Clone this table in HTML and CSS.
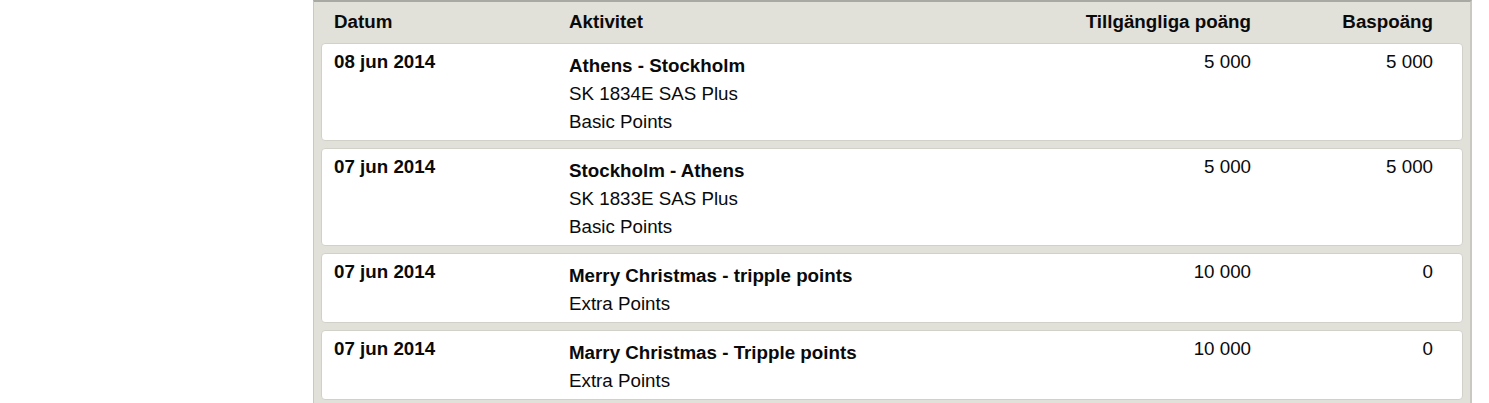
FILE: index.html
```html
<!DOCTYPE html>
<html lang="sv">
<head>
<meta charset="utf-8">
<title>Poänghistorik</title>
<link rel="stylesheet" href="styles.css">
</head>
<body>
<div class="page">
  <div class="panel">
    <div class="head">
      <div class="c-date">Datum</div>
      <div class="c-act">Aktivitet</div>
      <div class="c-pts">Tillgängliga poäng</div>
      <div class="c-base">Baspoäng</div>
    </div>
    <div class="card">
      <div class="c-date">08 jun 2014</div>
      <div class="c-act">
        <div class="title">Athens - Stockholm</div>
        <div class="line">SK 1834E SAS Plus</div>
        <div class="line">Basic Points</div>
      </div>
      <div class="c-pts">5 000</div>
      <div class="c-base">5 000</div>
    </div>
    <div class="card">
      <div class="c-date">07 jun 2014</div>
      <div class="c-act">
        <div class="title">Stockholm - Athens</div>
        <div class="line">SK 1833E SAS Plus</div>
        <div class="line">Basic Points</div>
      </div>
      <div class="c-pts">5 000</div>
      <div class="c-base">5 000</div>
    </div>
    <div class="card">
      <div class="c-date">07 jun 2014</div>
      <div class="c-act">
        <div class="title">Merry Christmas - tripple points</div>
        <div class="line">Extra Points</div>
      </div>
      <div class="c-pts">10 000</div>
      <div class="c-base">0</div>
    </div>
    <div class="card">
      <div class="c-date">07 jun 2014</div>
      <div class="c-act">
        <div class="title">Marry Christmas - Tripple points</div>
        <div class="line">Extra Points</div>
      </div>
      <div class="c-pts">10 000</div>
      <div class="c-base">0</div>
    </div>
  </div>
</div>
</body>
</html>
```

FILE: styles.css
```css
html, body {
  margin: 0;
  padding: 0;
  background: #ffffff;
}

body {
  font-family: "Liberation Sans", Arial, Helvetica, sans-serif;
  font-size: 18.75px;
  color: #0a0a0a;
}

.page {
  padding-left: 313px;
  width: 1159px;
}

.panel {
  background: #e1e0d9;
  border-top: 2px solid #a9a9a3;
  border-left: 1px solid #c9c9c2;
  border-right: 2px solid #c9c9c2;
  padding: 0 7px 6px 7px;
  height: 403px;
  box-sizing: border-box;
  overflow: hidden;
}

.head {
  display: flex;
  align-items: flex-start;
  padding: 10px 30px 11px 13px;
  font-weight: bold;
  line-height: 20px;
}

.card {
  display: flex;
  align-items: flex-start;
  background: #ffffff;
  border: 1px solid #d2d1c9;
  border-radius: 4px;
  padding: 8px 29px 4px 12px;
  margin-bottom: 7px;
  line-height: 20px;
}

.c-date {
  width: 235px;
  flex: none;
}

.card .c-date {
  font-weight: bold;
}

.c-act {
  flex: 1;
}

.c-pts {
  width: 220px;
  flex: none;
  text-align: right;
}

.c-base {
  width: 182px;
  flex: none;
  text-align: right;
}

.title,
.line {
  line-height: 28px;
}

.title {
  font-weight: bold;
}
```
